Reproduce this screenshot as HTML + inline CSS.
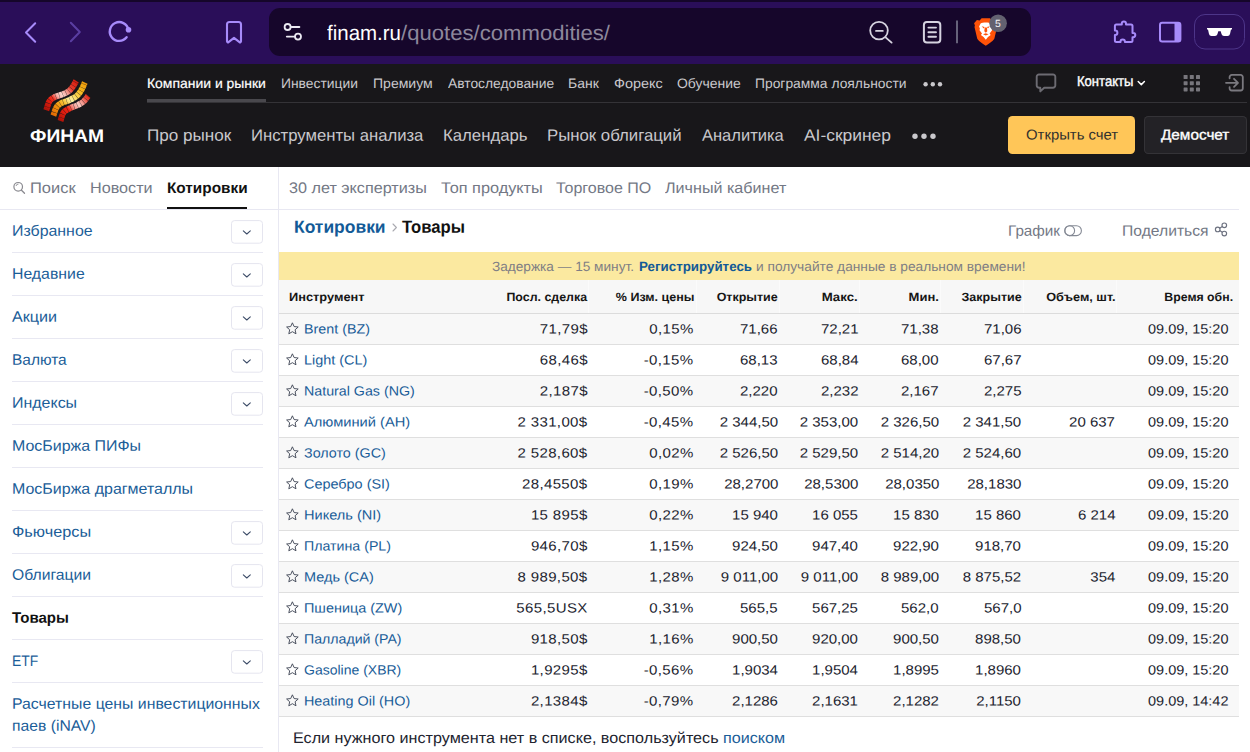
<!DOCTYPE html>
<html lang="ru"><head><meta charset="utf-8"><title>Котировки — Товары</title>
<style>
html,body{margin:0;padding:0;background:#fff;}
body{width:1250px;height:752px;position:relative;overflow:hidden;font-family:"Liberation Sans",sans-serif;}
.t{position:absolute;white-space:nowrap;line-height:1;display:block;text-rendering:geometricPrecision;}
.r{position:absolute;}
svg{position:absolute;overflow:visible;}
</style></head><body>
<div class="r" style="left:0.00px;top:0.00px;width:1250.00px;height:2.00px;background:#15062a;"></div>
<div class="r" style="left:0.00px;top:2.00px;width:1250.00px;height:62.00px;background:#2a0e59;"></div>
<div class="r" style="left:269.00px;top:8.00px;width:762.00px;height:48.00px;background:#16062b;border-radius:11px;"></div>
<svg style="left:0.00px;top:0.00px" width="1250" height="64" viewBox="0 0 1250 64"><polyline points="35.2,23.2 26,32.5 35.2,41.800" fill="none" stroke="#a78bfa" stroke-width="2" stroke-linecap="round" stroke-linejoin="round"/><polyline points="70.800,22.800 79.800,32 70.800,41.200" fill="none" stroke="#5a3ea2" stroke-width="2" stroke-linecap="round" stroke-linejoin="round"/><path d="M128.39 29.55 A9.40 9.40 0 1 0 126.61 37.29" fill="none" stroke="#a78bfa" stroke-width="2.400" stroke-linecap="round"/><circle cx="128.500" cy="29.700" r="2.800" fill="#a78bfa"/><path d="M227 41.400 V24.500 a2.500 2.500 0 0 1 2.500 -2.500 h9 a2.500 2.500 0 0 1 2.500 2.500 V41.400 a0.900 0.900 0 0 1 -1.500 0.700 l-5.500 -4.300 l-5.500 4.300 a0.900 0.900 0 0 1 -1.500 -0.700 z" fill="none" stroke="#a78bfa" stroke-width="2.1" stroke-linejoin="round"/><circle cx="287.6" cy="27" r="3" fill="none" stroke="#eceaf3" stroke-width="1.8"/><path d="M291.200 27 H299.400" stroke="#eceaf3" stroke-width="1.8" stroke-linecap="round"/><circle cx="298" cy="36.6" r="3" fill="none" stroke="#eceaf3" stroke-width="1.8"/><path d="M286.800 36.600 H294.600" stroke="#eceaf3" stroke-width="1.8" stroke-linecap="round"/><circle cx="879" cy="30.6" r="8.8" fill="none" stroke="#d6d3e0" stroke-width="1.8"/><path d="M876 30.900 H882.800" stroke="#d6d3e0" stroke-width="1.8" stroke-linecap="round"/><path d="M885.6 37.4 L891.6 42.6" stroke="#d6d3e0" stroke-width="1.9" stroke-linecap="round"/><rect x="923.9" y="22" width="16.4" height="20.6" rx="3" fill="none" stroke="#d6d3e0" stroke-width="2"/><path d="M928.4 27.6 H936 M928.4 32.2 H936 M928.4 36.8 H936" stroke="#d6d3e0" stroke-width="1.900" stroke-linecap="round"/><path d="M957 20.400 V43.200" stroke="#66627a" stroke-width="2" stroke-linecap="butt"/><path d="M981.600 18.200 H990 L992 20.400 L994.700 20 L997.500 23.300 L996.700 25.500 L997.100 27 L994.400 38.600 C993.700 40.700 990 43 985.800 45.800 C981.600 43 977.900 40.700 977.200 38.600 L974.500 27 L974.900 25.500 L974.100 23.300 L976.900 20 L979.600 20.400 Z" fill="#ff5208"/><path d="M985.800 22.600 C988 22.600 990 23 991 23.600 L992.500 26.500 L991.700 28.600 L992.100 30.200 L989.600 33.600 L990.700 35 L988 37.100 L985.800 39.700 L983.600 37.100 L980.900 35 L982 33.600 L979.500 30.200 L979.900 28.600 L979.100 26.500 L980.600 23.600 C981.600 23 983.600 22.600 985.800 22.600 Z" fill="#fff"/><path d="M981.700 26.300 l2.900 0.700 l-0.900 1.500 z M989.900 26.300 l-2.900 0.700 l0.900 1.500 z M984.700 27.600 h2.200 l0.400 3.600 l-1.500 1.500 l-1.500 -1.500 z M983 34.300 l2.800 -1 l2.800 1 l-2.800 1.300 z" fill="#ff5208"/><circle cx="998.100" cy="23.200" r="8.800" fill="#636170"/><path d="M1116.400 24.600 H1121.800 V23.500 a2.100 2.100 0 0 1 4.200 0 V24.600 H1131 a1.500 1.500 0 0 1 1.500 1.500 V33 h0.700 a2.100 2.100 0 0 1 0 4.200 h-0.700 V40.400 a1.500 1.500 0 0 1 -1.500 1.500 H1124.900 v-0.300 a2.200 2.200 0 0 0 -4.400 0 v0.300 H1116.400 a1.500 1.500 0 0 1 -1.500 -1.500 V34.900 h0.300 a2.200 2.200 0 0 0 0 -4.400 h-0.300 V26.100 a1.500 1.500 0 0 1 1.500 -1.500 z" fill="none" stroke="#a78bfa" stroke-width="2" stroke-linejoin="round"/><rect x="1160" y="22.800" width="20.400" height="18.600" rx="2.200" fill="none" stroke="#a78bfa" stroke-width="2"/><rect x="1174.500" y="22.800" width="5.900" height="18.600" fill="#a78bfa"/><rect x="1194.500" y="14.500" width="50" height="34.500" rx="10.500" fill="#2a0e59" stroke="#4d3589" stroke-width="1"/><path d="M1207 28 h25 v1.600 h-1 l-1 4.500 a2.500 2.500 0 0 1 -2.400 1.900 h-3.600 a2.500 2.500 0 0 1 -2.400 -1.800 l-0.900 -3 h-2.400 l-0.900 3 a2.500 2.500 0 0 1 -2.400 1.800 h-3.600 a2.500 2.500 0 0 1 -2.400 -1.900 l-1 -4.500 h-1 z" fill="#fff"/></svg>
<span class="t" style="top:23px;font-size:21.00px;color:#ffffff;left:327.00px;transform:scaleX(0.9755);transform-origin:0 0;">finam.ru</span>
<span class="t" style="top:23px;font-size:21.00px;color:#8d889c;left:401.00px;transform:scaleX(1.0532);transform-origin:0 0;">/quotes/commodities/</span>
<span class="t" style="top:20px;font-size:10.40px;color:#f4f3f7;left:995.20px;transform:scaleX(1.0032);transform-origin:0 0;">5</span>
<div class="r" style="left:0.00px;top:64.00px;width:1250.00px;height:103.00px;background:#18171a;"></div>
<div class="r" style="left:147.00px;top:102.00px;width:1100.00px;height:1.00px;background:#343337;"></div>
<div class="r" style="left:147.00px;top:99.00px;width:119.00px;height:3.40px;background:#49484d;"></div>
<span class="t" style="top:77px;font-size:13.70px;color:#ffffff;left:147.10px;transform:scaleX(1.0183);transform-origin:0 0;-webkit-text-stroke:0.18px #fff;">Компании и рынки</span>
<span class="t" style="top:77px;font-size:13.70px;color:#c9c8cc;left:280.80px;transform:scaleX(1.0114);transform-origin:0 0;">Инвестиции</span>
<span class="t" style="top:77px;font-size:13.70px;color:#c9c8cc;left:372.90px;transform:scaleX(1.0254);transform-origin:0 0;">Премиум</span>
<span class="t" style="top:77px;font-size:13.70px;color:#c9c8cc;left:447.50px;transform:scaleX(1.0093);transform-origin:0 0;">Автоследование</span>
<span class="t" style="top:77px;font-size:13.70px;color:#c9c8cc;left:568.30px;transform:scaleX(1.0213);transform-origin:0 0;">Банк</span>
<span class="t" style="top:77px;font-size:13.70px;color:#c9c8cc;left:613.60px;transform:scaleX(1.0533);transform-origin:0 0;">Форекс</span>
<span class="t" style="top:77px;font-size:13.70px;color:#c9c8cc;left:676.80px;transform:scaleX(1.0193);transform-origin:0 0;">Обучение</span>
<span class="t" style="top:77px;font-size:13.70px;color:#c9c8cc;left:755.10px;transform:scaleX(1.0118);transform-origin:0 0;">Программа лояльности</span>
<span class="t" style="top:127px;font-size:16.40px;color:#c9c8cc;left:146.90px;transform:translateY(0.75px) rotate(0.03deg) scaleX(1.0432);transform-origin:0 0;">Про рынок</span>
<span class="t" style="top:127px;font-size:16.40px;color:#c9c8cc;left:251.10px;transform:translateY(0.75px) rotate(0.03deg) scaleX(1.0178);transform-origin:0 0;">Инструменты анализа</span>
<span class="t" style="top:127px;font-size:16.40px;color:#c9c8cc;left:442.90px;transform:translateY(0.75px) rotate(0.03deg) scaleX(1.0225);transform-origin:0 0;">Календарь</span>
<span class="t" style="top:127px;font-size:16.40px;color:#c9c8cc;left:546.90px;transform:translateY(0.75px) rotate(0.03deg) scaleX(1.0233);transform-origin:0 0;">Рынок облигаций</span>
<span class="t" style="top:127px;font-size:16.40px;color:#c9c8cc;left:701.80px;transform:translateY(0.75px) rotate(0.03deg) scaleX(1.0069);transform-origin:0 0;">Аналитика</span>
<span class="t" style="top:127px;font-size:16.40px;color:#c9c8cc;left:803.50px;transform:translateY(0.75px) rotate(0.03deg) scaleX(1.0626);transform-origin:0 0;">AI-скринер</span>
<div class="r" style="left:1008.00px;top:116.00px;width:127.00px;height:38.00px;background:#ffc658;border-radius:4.5px;"></div>
<div class="r" style="left:1144.00px;top:116.00px;width:103.00px;height:38.00px;background:#232226;border-radius:4.5px;box-shadow:inset 0 0 0 1px #343337;"></div>
<span class="t" style="top:75px;font-size:14.30px;color:#ffffff;left:1077.30px;transform:scaleX(0.9131);transform-origin:0 0;-webkit-text-stroke:0.4px #fff;">Контакты</span>
<span class="t" style="top:128px;font-size:14.30px;color:#33322e;left:1025.80px;transform:translateY(0.50px) rotate(0.03deg) scaleX(1.0407);transform-origin:0 0;">Открыть счет</span>
<span class="t" style="top:128px;font-size:14.30px;color:#ffffff;left:1161.40px;transform:translateY(0.50px) rotate(0.03deg) scaleX(1.0706);transform-origin:0 0;-webkit-text-stroke:0.35px #fff;">Демосчет</span>
<svg style="left:0.00px;top:64.00px" width="1250" height="103" viewBox="0 64 1250 103"><circle cx="925.6" cy="84.2" r="2.2" fill="#c9c8cc"/><circle cx="932.8" cy="84.2" r="2.2" fill="#c9c8cc"/><circle cx="940.0" cy="84.2" r="2.2" fill="#c9c8cc"/><circle cx="915.0" cy="136.2" r="2.7" fill="#c9c8cc"/><circle cx="924.0" cy="136.2" r="2.7" fill="#c9c8cc"/><circle cx="933.0" cy="136.2" r="2.7" fill="#c9c8cc"/><path d="M1039 74.500 h14 a2.300 2.300 0 0 1 2.300 2.300 v8.600 a2.300 2.300 0 0 1 -2.300 2.300 h-8.800 l-3.900 3.700 v-3.700 h-1.300 a2.300 2.300 0 0 1 -2.300 -2.300 v-8.600 a2.300 2.300 0 0 1 2.300 -2.300 z" fill="none" stroke="#6c6b72" stroke-width="1.900" stroke-linejoin="round"/><polyline points="1138.200,81.500 1141.300,84.600 1144.400,81.500" fill="none" stroke="#fff" stroke-width="1.500" stroke-linecap="round" stroke-linejoin="round"/><rect x="1183.6" y="75.0" width="4" height="4" rx="0.600" fill="#77767c"/><rect x="1183.6" y="81.2" width="4" height="4" rx="0.600" fill="#77767c"/><rect x="1183.6" y="87.4" width="4" height="4" rx="0.600" fill="#77767c"/><rect x="1189.8" y="75.0" width="4" height="4" rx="0.600" fill="#77767c"/><rect x="1189.8" y="81.2" width="4" height="4" rx="0.600" fill="#77767c"/><rect x="1189.8" y="87.4" width="4" height="4" rx="0.600" fill="#77767c"/><rect x="1196.0" y="75.0" width="4" height="4" rx="0.600" fill="#77767c"/><rect x="1196.0" y="81.2" width="4" height="4" rx="0.600" fill="#77767c"/><rect x="1196.0" y="87.4" width="4" height="4" rx="0.600" fill="#77767c"/><path d="M1229.600 78.300 v-1.200 a2.200 2.200 0 0 1 2.200 -2.200 h8.800 a2.200 2.200 0 0 1 2.200 2.200 v11.200 a2.200 2.200 0 0 1 -2.200 2.200 h-8.800 a2.200 2.200 0 0 1 -2.200 -2.200 v-1.200" fill="none" stroke="#7a797f" stroke-width="1.800" stroke-linecap="round"/><path d="M1226 82.800 h11.800 M1234 78.800 l4 4 l-4 4" fill="none" stroke="#7a797f" stroke-width="1.800" stroke-linecap="round" stroke-linejoin="round"/><defs><linearGradient id="g1" gradientUnits="userSpaceOnUse" x1="46" y1="109" x2="77" y2="81"><stop offset="0" stop-color="#b0140a"/><stop offset=".18" stop-color="#e01c0e"/><stop offset=".3" stop-color="#ee3020"/><stop offset=".42" stop-color="#f8b4ac"/><stop offset=".52" stop-color="#fad2cb"/><stop offset=".64" stop-color="#f29a92"/><stop offset=".78" stop-color="#e63a2a"/><stop offset="1" stop-color="#d61a0c"/></linearGradient><linearGradient id="g2" gradientUnits="userSpaceOnUse" x1="53" y1="114" x2="85" y2="83"><stop offset="0" stop-color="#e46c04"/><stop offset=".2" stop-color="#f2940c"/><stop offset=".36" stop-color="#f7c236"/><stop offset=".5" stop-color="#fcf0a2"/><stop offset=".64" stop-color="#f9d858"/><stop offset=".8" stop-color="#f6b81c"/><stop offset="1" stop-color="#ee9a0a"/></linearGradient><linearGradient id="g3" gradientUnits="userSpaceOnUse" x1="60" y1="120" x2="89" y2="96"><stop offset="0" stop-color="#ae1208"/><stop offset=".2" stop-color="#e01c0e"/><stop offset=".36" stop-color="#f02414"/><stop offset=".5" stop-color="#f6968c"/><stop offset=".64" stop-color="#fac8c0"/><stop offset=".78" stop-color="#f28a80"/><stop offset=".9" stop-color="#e64434"/><stop offset="1" stop-color="#dc2414"/></linearGradient></defs><path d="M46.30 110.20 C46.82 108.72 48.05 103.47 49.40 101.30 C50.75 99.13 52.30 98.33 54.40 97.20 C56.50 96.07 59.65 95.47 62.00 94.50 C64.35 93.53 66.68 92.73 68.50 91.40 C70.32 90.07 71.62 88.25 72.90 86.50 C74.18 84.75 75.65 81.83 76.20 80.90" fill="none" stroke="url(#g1)" stroke-width="6.000" stroke-dasharray="3.250 0.300"/><path d="M53.40 115.60 C53.92 114.22 55.17 109.38 56.50 107.30 C57.83 105.22 59.30 104.28 61.40 103.10 C63.50 101.92 66.52 101.42 69.10 100.20 C71.68 98.98 74.82 97.57 76.90 95.80 C78.98 94.03 80.28 91.80 81.60 89.60 C82.92 87.40 84.27 83.77 84.80 82.60" fill="none" stroke="url(#g2)" stroke-width="6.000" stroke-dasharray="3.250 0.300"/><path d="M60.50 121.00 C61.02 119.58 61.98 114.65 63.60 112.50 C65.22 110.35 67.83 109.33 70.20 108.10 C72.57 106.87 75.53 106.23 77.80 105.10 C80.07 103.97 82.07 102.85 83.80 101.30 C85.53 99.75 87.47 96.72 88.20 95.80" fill="none" stroke="url(#g3)" stroke-width="6.000" stroke-dasharray="3.250 0.300"/></svg>
<span class="t" style="top:127px;font-size:18.00px;color:#ffffff;font-weight:700;left:30.20px;transform:scaleX(1.0679);transform-origin:0 0;">ФИНАМ</span>
<div class="r" style="left:278.00px;top:167.00px;width:1.00px;height:585.00px;background:#e8e8f2;"></div>
<div class="r" style="left:0.00px;top:209.00px;width:1239.00px;height:1.00px;background:#e8e8f2;"></div>
<div class="r" style="left:167.00px;top:207.00px;width:80.00px;height:2.40px;background:#111;"></div>
<span class="t" style="top:181px;font-size:15.35px;color:#737885;left:30.30px;transform:scaleX(1.0722);transform-origin:0 0;">Поиск</span>
<span class="t" style="top:181px;font-size:15.35px;color:#737885;left:89.60px;transform:scaleX(1.0538);transform-origin:0 0;">Новости</span>
<span class="t" style="top:181px;font-size:15.35px;color:#111111;font-weight:700;left:166.60px;transform:scaleX(1.0001);transform-origin:0 0;">Котировки</span>
<span class="t" style="top:223px;font-size:15.10px;color:#1a5d98;left:11.70px;transform:translateY(0.75px) rotate(0.03deg) scaleX(1.0536);transform-origin:0 0;">Избранное</span>
<div class="r" style="left:12.00px;top:252.30px;width:251.00px;height:1.00px;background:#e8e8f2;"></div>
<span class="t" style="top:266px;font-size:15.10px;color:#1a5d98;left:11.70px;transform:translateY(0.75px) rotate(0.03deg) scaleX(1.0482);transform-origin:0 0;">Недавние</span>
<div class="r" style="left:12.00px;top:295.30px;width:251.00px;height:1.00px;background:#e8e8f2;"></div>
<span class="t" style="top:309px;font-size:15.10px;color:#1a5d98;left:11.70px;transform:translateY(0.75px) rotate(0.03deg) scaleX(1.0667);transform-origin:0 0;">Акции</span>
<div class="r" style="left:12.00px;top:338.30px;width:251.00px;height:1.00px;background:#e8e8f2;"></div>
<span class="t" style="top:352px;font-size:15.10px;color:#1a5d98;left:11.70px;transform:translateY(0.75px) rotate(0.03deg) scaleX(1.0242);transform-origin:0 0;">Валюта</span>
<div class="r" style="left:12.00px;top:381.30px;width:251.00px;height:1.00px;background:#e8e8f2;"></div>
<span class="t" style="top:395px;font-size:15.10px;color:#1a5d98;left:11.70px;transform:translateY(0.75px) rotate(0.03deg) scaleX(1.0575);transform-origin:0 0;">Индексы</span>
<div class="r" style="left:12.00px;top:424.30px;width:251.00px;height:1.00px;background:#e8e8f2;"></div>
<span class="t" style="top:438px;font-size:15.10px;color:#1a5d98;left:11.70px;transform:translateY(0.75px) rotate(0.03deg) scaleX(1.0571);transform-origin:0 0;">МосБиржа ПИФы</span>
<div class="r" style="left:12.00px;top:467.30px;width:251.00px;height:1.00px;background:#e8e8f2;"></div>
<span class="t" style="top:481px;font-size:15.10px;color:#1a5d98;left:11.70px;transform:translateY(0.75px) rotate(0.03deg) scaleX(1.0586);transform-origin:0 0;">МосБиржа драгметаллы</span>
<div class="r" style="left:12.00px;top:510.30px;width:251.00px;height:1.00px;background:#e8e8f2;"></div>
<span class="t" style="top:524px;font-size:15.10px;color:#1a5d98;left:11.70px;transform:translateY(0.75px) rotate(0.03deg) scaleX(1.0778);transform-origin:0 0;">Фьючерсы</span>
<div class="r" style="left:12.00px;top:553.30px;width:251.00px;height:1.00px;background:#e8e8f2;"></div>
<span class="t" style="top:567px;font-size:15.10px;color:#1a5d98;left:11.70px;transform:translateY(0.75px) rotate(0.03deg) scaleX(1.0404);transform-origin:0 0;">Облигации</span>
<div class="r" style="left:12.00px;top:596.30px;width:251.00px;height:1.00px;background:#e8e8f2;"></div>
<span class="t" style="top:610px;font-size:15.10px;color:#111111;font-weight:700;left:11.70px;transform:translateY(0.75px) rotate(0.03deg) scaleX(0.9969);transform-origin:0 0;">Товары</span>
<div class="r" style="left:12.00px;top:639.30px;width:251.00px;height:1.00px;background:#e8e8f2;"></div>
<span class="t" style="top:653px;font-size:15.10px;color:#1a5d98;left:11.70px;transform:translateY(0.75px) rotate(0.03deg) scaleX(0.9223);transform-origin:0 0;">ETF</span>
<div class="r" style="left:12.00px;top:682.30px;width:251.00px;height:1.00px;background:#e8e8f2;"></div>
<span class="t" style="top:696px;font-size:15.10px;color:#1a5d98;left:11.70px;transform:translateY(0.75px) rotate(0.03deg) scaleX(1.0483);transform-origin:0 0;">Расчетные цены инвестиционных</span>
<span class="t" style="top:718px;font-size:15.10px;color:#1a5d98;left:11.70px;transform:translateY(0.75px) rotate(0.03deg) scaleX(1.0410);transform-origin:0 0;">паев (iNAV)</span>
<div class="r" style="left:12.00px;top:747.30px;width:251.00px;height:1.00px;background:#e8e8f2;"></div>
<svg style="left:0.00px;top:167.00px" width="279" height="585" viewBox="0 167 279 585"><circle cx="18.200" cy="186.800" r="4.300" fill="none" stroke="#8a8a90" stroke-width="1.200"/><path d="M21.500 190.200 l3 3" stroke="#8a8a90" stroke-width="1.300" stroke-linecap="round"/><path d="M16 186 a2.500 2.500 0 0 1 2.500 -2" fill="none" stroke="#8a8a90" stroke-width="0.900"/><rect x="231.500" y="220.60" width="31" height="22.600" rx="3" fill="#fff" stroke="#e5e5ef" stroke-width="1"/><polyline points="243.300,230.80 246.800,234.00 250.300,230.80" fill="none" stroke="#3a4a66" stroke-width="1.050" stroke-linecap="round" stroke-linejoin="round"/><rect x="231.500" y="263.60" width="31" height="22.600" rx="3" fill="#fff" stroke="#e5e5ef" stroke-width="1"/><polyline points="243.300,273.80 246.800,277.00 250.300,273.80" fill="none" stroke="#3a4a66" stroke-width="1.050" stroke-linecap="round" stroke-linejoin="round"/><rect x="231.500" y="306.60" width="31" height="22.600" rx="3" fill="#fff" stroke="#e5e5ef" stroke-width="1"/><polyline points="243.300,316.80 246.800,320.00 250.300,316.80" fill="none" stroke="#3a4a66" stroke-width="1.050" stroke-linecap="round" stroke-linejoin="round"/><rect x="231.500" y="349.60" width="31" height="22.600" rx="3" fill="#fff" stroke="#e5e5ef" stroke-width="1"/><polyline points="243.300,359.80 246.800,363.00 250.300,359.80" fill="none" stroke="#3a4a66" stroke-width="1.050" stroke-linecap="round" stroke-linejoin="round"/><rect x="231.500" y="392.60" width="31" height="22.600" rx="3" fill="#fff" stroke="#e5e5ef" stroke-width="1"/><polyline points="243.300,402.80 246.800,406.00 250.300,402.80" fill="none" stroke="#3a4a66" stroke-width="1.050" stroke-linecap="round" stroke-linejoin="round"/><rect x="231.500" y="521.60" width="31" height="22.600" rx="3" fill="#fff" stroke="#e5e5ef" stroke-width="1"/><polyline points="243.300,531.80 246.800,535.00 250.300,531.80" fill="none" stroke="#3a4a66" stroke-width="1.050" stroke-linecap="round" stroke-linejoin="round"/><rect x="231.500" y="564.60" width="31" height="22.600" rx="3" fill="#fff" stroke="#e5e5ef" stroke-width="1"/><polyline points="243.300,574.80 246.800,578.00 250.300,574.80" fill="none" stroke="#3a4a66" stroke-width="1.050" stroke-linecap="round" stroke-linejoin="round"/><rect x="231.500" y="650.60" width="31" height="22.600" rx="3" fill="#fff" stroke="#e5e5ef" stroke-width="1"/><polyline points="243.300,660.80 246.800,664.00 250.300,660.80" fill="none" stroke="#3a4a66" stroke-width="1.050" stroke-linecap="round" stroke-linejoin="round"/></svg>
<span class="t" style="top:181px;font-size:15.35px;color:#737885;left:288.60px;transform:scaleX(1.0544);transform-origin:0 0;">30 лет экспертизы</span>
<span class="t" style="top:181px;font-size:15.35px;color:#737885;left:440.60px;transform:scaleX(1.0616);transform-origin:0 0;">Топ продукты</span>
<span class="t" style="top:181px;font-size:15.35px;color:#737885;left:556.10px;transform:scaleX(1.0437);transform-origin:0 0;">Торговое ПО</span>
<span class="t" style="top:181px;font-size:15.35px;color:#737885;left:665.10px;transform:scaleX(1.0506);transform-origin:0 0;">Личный кабинет</span>
<span class="t" style="top:218px;font-size:17.60px;color:#125a97;font-weight:700;left:293.60px;transform:translateY(0.75px) rotate(0.03deg) scaleX(0.9911);transform-origin:0 0;">Котировки</span>
<span class="t" style="top:218px;font-size:17.60px;color:#111111;font-weight:700;left:402.20px;transform:translateY(0.75px) rotate(0.03deg) scaleX(0.9469);transform-origin:0 0;">Товары</span>
<span class="t" style="top:223px;font-size:15.00px;color:#737885;left:1007.60px;transform:translateY(0.75px) rotate(0.03deg) scaleX(1.0146);transform-origin:0 0;">График</span>
<span class="t" style="top:223px;font-size:15.00px;color:#737885;left:1122.00px;transform:translateY(0.75px) rotate(0.03deg) scaleX(1.0453);transform-origin:0 0;">Поделиться</span>
<div class="r" style="left:279.00px;top:252.00px;width:960.00px;height:28.00px;background:#fbe9a0;"></div>
<span class="t" style="top:260px;font-size:13.40px;color:#7f7e84;left:492.40px;transform:scaleX(1.0186);transform-origin:0 0;">Задержка — 15 минут.</span>
<span class="t" style="top:260px;font-size:13.40px;color:#125a97;font-weight:700;left:638.60px;transform:scaleX(0.9959);transform-origin:0 0;">Регистрируйтесь</span>
<span class="t" style="top:260px;font-size:13.40px;color:#7f7e84;left:756.00px;transform:scaleX(1.0247);transform-origin:0 0;">и получайте данные в реальном времени!</span>
<div class="r" style="left:279.00px;top:280.00px;width:960.00px;height:33.00px;background:#f7f7f7;"></div>
<div class="r" style="left:279.00px;top:313.00px;width:960.00px;height:1.00px;background:#dcdcdc;"></div>
<div class="r" style="left:588.00px;top:280.00px;width:1.40px;height:33.00px;background:#fbfbfb;"></div>
<div class="r" style="left:696.00px;top:280.00px;width:1.40px;height:33.00px;background:#fbfbfb;"></div>
<div class="r" style="left:779.00px;top:280.00px;width:1.40px;height:33.00px;background:#fbfbfb;"></div>
<div class="r" style="left:859.00px;top:280.00px;width:1.40px;height:33.00px;background:#fbfbfb;"></div>
<div class="r" style="left:940.00px;top:280.00px;width:1.40px;height:33.00px;background:#fbfbfb;"></div>
<div class="r" style="left:1022.70px;top:280.00px;width:1.40px;height:33.00px;background:#fbfbfb;"></div>
<div class="r" style="left:1116.00px;top:280.00px;width:1.40px;height:33.00px;background:#fbfbfb;"></div>
<span class="t" style="top:291px;font-size:12.00px;color:#151515;font-weight:700;left:288.60px;transform:scaleX(1.0678);transform-origin:0 0;">Инструмент</span>
<span class="t" style="top:291px;font-size:12.00px;color:#151515;font-weight:700;right:662.80px;transform:scaleX(1.0329);transform-origin:100% 0;">Посл. сделка</span>
<span class="t" style="top:291px;font-size:12.00px;color:#151515;font-weight:700;right:555.70px;transform:scaleX(1.0426);transform-origin:100% 0;">% Изм. цены</span>
<span class="t" style="top:291px;font-size:12.00px;color:#151515;font-weight:700;right:472.30px;transform:scaleX(1.0403);transform-origin:100% 0;">Открытие</span>
<span class="t" style="top:291px;font-size:12.00px;color:#151515;font-weight:700;right:392.30px;transform:scaleX(1.1019);transform-origin:100% 0;">Макс.</span>
<span class="t" style="top:291px;font-size:12.00px;color:#151515;font-weight:700;right:311.40px;transform:scaleX(1.0869);transform-origin:100% 0;">Мин.</span>
<span class="t" style="top:291px;font-size:12.00px;color:#151515;font-weight:700;right:228.70px;transform:scaleX(1.0433);transform-origin:100% 0;">Закрытие</span>
<span class="t" style="top:291px;font-size:12.00px;color:#151515;font-weight:700;right:134.90px;transform:scaleX(1.0585);transform-origin:100% 0;">Объем, шт.</span>
<span class="t" style="top:291px;font-size:12.00px;color:#151515;font-weight:700;right:16.80px;transform:scaleX(1.0244);transform-origin:100% 0;">Время обн.</span>
<div class="r" style="left:279.00px;top:314.00px;width:960.00px;height:30.00px;background:#f8f8f8;"></div>
<div class="r" style="left:279.00px;top:344.00px;width:960.00px;height:1.00px;background:#dfdfdf;"></div>
<span class="t" style="top:322px;font-size:13.40px;color:#1a5d98;left:303.80px;transform:translateY(0.50px) rotate(0.03deg) scaleX(1.0686);transform-origin:0 0;">Brent (BZ)</span>
<span class="t" style="top:322px;font-size:13.40px;color:#22242f;letter-spacing:0.33px;margin-right:-0.33px;right:662.60px;transform:translateY(0.50px) rotate(0.03deg) scaleX(1.1200);transform-origin:100% 0;">71,79$</span>
<span class="t" style="top:322px;font-size:13.40px;color:#22242f;letter-spacing:0.33px;margin-right:-0.33px;right:556.60px;transform:translateY(0.50px) rotate(0.03deg) scaleX(1.1200);transform-origin:100% 0;">0,15%</span>
<span class="t" style="top:322px;font-size:13.40px;color:#22242f;right:472.00px;transform:translateY(0.50px) rotate(0.03deg) scaleX(1.1200);transform-origin:100% 0;">71,66</span>
<span class="t" style="top:322px;font-size:13.40px;color:#22242f;right:391.60px;transform:translateY(0.50px) rotate(0.03deg) scaleX(1.1200);transform-origin:100% 0;">72,21</span>
<span class="t" style="top:322px;font-size:13.40px;color:#22242f;right:311.00px;transform:translateY(0.50px) rotate(0.03deg) scaleX(1.1200);transform-origin:100% 0;">71,38</span>
<span class="t" style="top:322px;font-size:13.40px;color:#22242f;right:228.60px;transform:translateY(0.50px) rotate(0.03deg) scaleX(1.1200);transform-origin:100% 0;">71,06</span>
<span class="t" style="top:322px;font-size:13.40px;color:#22242f;right:21.20px;transform:translateY(0.50px) rotate(0.03deg) scaleX(1.0796);transform-origin:100% 0;">09.09, 15:20</span>
<div class="r" style="left:279.00px;top:375.00px;width:960.00px;height:1.00px;background:#dfdfdf;"></div>
<span class="t" style="top:353px;font-size:13.40px;color:#1a5d98;left:303.80px;transform:translateY(0.50px) rotate(0.03deg) scaleX(1.0783);transform-origin:0 0;">Light (CL)</span>
<span class="t" style="top:353px;font-size:13.40px;color:#22242f;letter-spacing:0.33px;margin-right:-0.33px;right:662.60px;transform:translateY(0.50px) rotate(0.03deg) scaleX(1.1200);transform-origin:100% 0;">68,46$</span>
<span class="t" style="top:353px;font-size:13.40px;color:#22242f;letter-spacing:0.33px;margin-right:-0.33px;right:556.60px;transform:translateY(0.50px) rotate(0.03deg) scaleX(1.1200);transform-origin:100% 0;">-0,15%</span>
<span class="t" style="top:353px;font-size:13.40px;color:#22242f;right:472.00px;transform:translateY(0.50px) rotate(0.03deg) scaleX(1.1200);transform-origin:100% 0;">68,13</span>
<span class="t" style="top:353px;font-size:13.40px;color:#22242f;right:391.60px;transform:translateY(0.50px) rotate(0.03deg) scaleX(1.1200);transform-origin:100% 0;">68,84</span>
<span class="t" style="top:353px;font-size:13.40px;color:#22242f;right:311.00px;transform:translateY(0.50px) rotate(0.03deg) scaleX(1.1200);transform-origin:100% 0;">68,00</span>
<span class="t" style="top:353px;font-size:13.40px;color:#22242f;right:228.60px;transform:translateY(0.50px) rotate(0.03deg) scaleX(1.1200);transform-origin:100% 0;">67,67</span>
<span class="t" style="top:353px;font-size:13.40px;color:#22242f;right:21.20px;transform:translateY(0.50px) rotate(0.03deg) scaleX(1.0796);transform-origin:100% 0;">09.09, 15:20</span>
<div class="r" style="left:279.00px;top:376.00px;width:960.00px;height:30.00px;background:#f8f8f8;"></div>
<div class="r" style="left:279.00px;top:406.00px;width:960.00px;height:1.00px;background:#dfdfdf;"></div>
<span class="t" style="top:384px;font-size:13.40px;color:#1a5d98;left:303.80px;transform:translateY(0.50px) rotate(0.03deg) scaleX(1.0636);transform-origin:0 0;">Natural Gas (NG)</span>
<span class="t" style="top:384px;font-size:13.40px;color:#22242f;letter-spacing:0.33px;margin-right:-0.33px;right:662.60px;transform:translateY(0.50px) rotate(0.03deg) scaleX(1.1200);transform-origin:100% 0;">2,187$</span>
<span class="t" style="top:384px;font-size:13.40px;color:#22242f;letter-spacing:0.33px;margin-right:-0.33px;right:556.60px;transform:translateY(0.50px) rotate(0.03deg) scaleX(1.1200);transform-origin:100% 0;">-0,50%</span>
<span class="t" style="top:384px;font-size:13.40px;color:#22242f;right:472.00px;transform:translateY(0.50px) rotate(0.03deg) scaleX(1.1200);transform-origin:100% 0;">2,220</span>
<span class="t" style="top:384px;font-size:13.40px;color:#22242f;right:391.60px;transform:translateY(0.50px) rotate(0.03deg) scaleX(1.1200);transform-origin:100% 0;">2,232</span>
<span class="t" style="top:384px;font-size:13.40px;color:#22242f;right:311.00px;transform:translateY(0.50px) rotate(0.03deg) scaleX(1.1200);transform-origin:100% 0;">2,167</span>
<span class="t" style="top:384px;font-size:13.40px;color:#22242f;right:228.60px;transform:translateY(0.50px) rotate(0.03deg) scaleX(1.1200);transform-origin:100% 0;">2,275</span>
<span class="t" style="top:384px;font-size:13.40px;color:#22242f;right:21.20px;transform:translateY(0.50px) rotate(0.03deg) scaleX(1.0796);transform-origin:100% 0;">09.09, 15:20</span>
<div class="r" style="left:279.00px;top:437.00px;width:960.00px;height:1.00px;background:#dfdfdf;"></div>
<span class="t" style="top:415px;font-size:13.40px;color:#1a5d98;left:303.80px;transform:translateY(0.50px) rotate(0.03deg) scaleX(1.0957);transform-origin:0 0;">Алюминий (AH)</span>
<span class="t" style="top:415px;font-size:13.40px;color:#22242f;letter-spacing:0.33px;margin-right:-0.33px;right:662.60px;transform:translateY(0.50px) rotate(0.03deg) scaleX(1.1200);transform-origin:100% 0;">2 331,00$</span>
<span class="t" style="top:415px;font-size:13.40px;color:#22242f;letter-spacing:0.33px;margin-right:-0.33px;right:556.60px;transform:translateY(0.50px) rotate(0.03deg) scaleX(1.1200);transform-origin:100% 0;">-0,45%</span>
<span class="t" style="top:415px;font-size:13.40px;color:#22242f;right:472.00px;transform:translateY(0.50px) rotate(0.03deg) scaleX(1.1200);transform-origin:100% 0;">2 344,50</span>
<span class="t" style="top:415px;font-size:13.40px;color:#22242f;right:391.60px;transform:translateY(0.50px) rotate(0.03deg) scaleX(1.1200);transform-origin:100% 0;">2 353,00</span>
<span class="t" style="top:415px;font-size:13.40px;color:#22242f;right:311.00px;transform:translateY(0.50px) rotate(0.03deg) scaleX(1.1200);transform-origin:100% 0;">2 326,50</span>
<span class="t" style="top:415px;font-size:13.40px;color:#22242f;right:228.60px;transform:translateY(0.50px) rotate(0.03deg) scaleX(1.1200);transform-origin:100% 0;">2 341,50</span>
<span class="t" style="top:415px;font-size:13.40px;color:#22242f;right:134.80px;transform:translateY(0.50px) rotate(0.03deg) scaleX(1.1200);transform-origin:100% 0;">20 637</span>
<span class="t" style="top:415px;font-size:13.40px;color:#22242f;right:21.20px;transform:translateY(0.50px) rotate(0.03deg) scaleX(1.0796);transform-origin:100% 0;">09.09, 15:20</span>
<div class="r" style="left:279.00px;top:438.00px;width:960.00px;height:30.00px;background:#f8f8f8;"></div>
<div class="r" style="left:279.00px;top:468.00px;width:960.00px;height:1.00px;background:#dfdfdf;"></div>
<span class="t" style="top:446px;font-size:13.40px;color:#1a5d98;left:303.80px;transform:translateY(0.50px) rotate(0.03deg) scaleX(1.0691);transform-origin:0 0;">Золото (GC)</span>
<span class="t" style="top:446px;font-size:13.40px;color:#22242f;letter-spacing:0.33px;margin-right:-0.33px;right:662.60px;transform:translateY(0.50px) rotate(0.03deg) scaleX(1.1200);transform-origin:100% 0;">2 528,60$</span>
<span class="t" style="top:446px;font-size:13.40px;color:#22242f;letter-spacing:0.33px;margin-right:-0.33px;right:556.60px;transform:translateY(0.50px) rotate(0.03deg) scaleX(1.1200);transform-origin:100% 0;">0,02%</span>
<span class="t" style="top:446px;font-size:13.40px;color:#22242f;right:472.00px;transform:translateY(0.50px) rotate(0.03deg) scaleX(1.1200);transform-origin:100% 0;">2 526,50</span>
<span class="t" style="top:446px;font-size:13.40px;color:#22242f;right:391.60px;transform:translateY(0.50px) rotate(0.03deg) scaleX(1.1200);transform-origin:100% 0;">2 529,50</span>
<span class="t" style="top:446px;font-size:13.40px;color:#22242f;right:311.00px;transform:translateY(0.50px) rotate(0.03deg) scaleX(1.1200);transform-origin:100% 0;">2 514,20</span>
<span class="t" style="top:446px;font-size:13.40px;color:#22242f;right:228.60px;transform:translateY(0.50px) rotate(0.03deg) scaleX(1.1200);transform-origin:100% 0;">2 524,60</span>
<span class="t" style="top:446px;font-size:13.40px;color:#22242f;right:21.20px;transform:translateY(0.50px) rotate(0.03deg) scaleX(1.0796);transform-origin:100% 0;">09.09, 15:20</span>
<div class="r" style="left:279.00px;top:499.00px;width:960.00px;height:1.00px;background:#dfdfdf;"></div>
<span class="t" style="top:477px;font-size:13.40px;color:#1a5d98;left:303.80px;transform:translateY(0.50px) rotate(0.03deg) scaleX(1.0775);transform-origin:0 0;">Серебро (SI)</span>
<span class="t" style="top:477px;font-size:13.40px;color:#22242f;letter-spacing:0.33px;margin-right:-0.33px;right:662.60px;transform:translateY(0.50px) rotate(0.03deg) scaleX(1.1200);transform-origin:100% 0;">28,4550$</span>
<span class="t" style="top:477px;font-size:13.40px;color:#22242f;letter-spacing:0.33px;margin-right:-0.33px;right:556.60px;transform:translateY(0.50px) rotate(0.03deg) scaleX(1.1200);transform-origin:100% 0;">0,19%</span>
<span class="t" style="top:477px;font-size:13.40px;color:#22242f;right:472.00px;transform:translateY(0.50px) rotate(0.03deg) scaleX(1.1200);transform-origin:100% 0;">28,2700</span>
<span class="t" style="top:477px;font-size:13.40px;color:#22242f;right:391.60px;transform:translateY(0.50px) rotate(0.03deg) scaleX(1.1200);transform-origin:100% 0;">28,5300</span>
<span class="t" style="top:477px;font-size:13.40px;color:#22242f;right:311.00px;transform:translateY(0.50px) rotate(0.03deg) scaleX(1.1200);transform-origin:100% 0;">28,0350</span>
<span class="t" style="top:477px;font-size:13.40px;color:#22242f;right:228.60px;transform:translateY(0.50px) rotate(0.03deg) scaleX(1.1200);transform-origin:100% 0;">28,1830</span>
<span class="t" style="top:477px;font-size:13.40px;color:#22242f;right:21.20px;transform:translateY(0.50px) rotate(0.03deg) scaleX(1.0796);transform-origin:100% 0;">09.09, 15:20</span>
<div class="r" style="left:279.00px;top:500.00px;width:960.00px;height:30.00px;background:#f8f8f8;"></div>
<div class="r" style="left:279.00px;top:530.00px;width:960.00px;height:1.00px;background:#dfdfdf;"></div>
<span class="t" style="top:508px;font-size:13.40px;color:#1a5d98;left:303.80px;transform:translateY(0.50px) rotate(0.03deg) scaleX(1.0876);transform-origin:0 0;">Никель (NI)</span>
<span class="t" style="top:508px;font-size:13.40px;color:#22242f;letter-spacing:0.33px;margin-right:-0.33px;right:662.60px;transform:translateY(0.50px) rotate(0.03deg) scaleX(1.1200);transform-origin:100% 0;">15 895$</span>
<span class="t" style="top:508px;font-size:13.40px;color:#22242f;letter-spacing:0.33px;margin-right:-0.33px;right:556.60px;transform:translateY(0.50px) rotate(0.03deg) scaleX(1.1200);transform-origin:100% 0;">0,22%</span>
<span class="t" style="top:508px;font-size:13.40px;color:#22242f;right:472.00px;transform:translateY(0.50px) rotate(0.03deg) scaleX(1.1200);transform-origin:100% 0;">15 940</span>
<span class="t" style="top:508px;font-size:13.40px;color:#22242f;right:391.60px;transform:translateY(0.50px) rotate(0.03deg) scaleX(1.1200);transform-origin:100% 0;">16 055</span>
<span class="t" style="top:508px;font-size:13.40px;color:#22242f;right:311.00px;transform:translateY(0.50px) rotate(0.03deg) scaleX(1.1200);transform-origin:100% 0;">15 830</span>
<span class="t" style="top:508px;font-size:13.40px;color:#22242f;right:228.60px;transform:translateY(0.50px) rotate(0.03deg) scaleX(1.1200);transform-origin:100% 0;">15 860</span>
<span class="t" style="top:508px;font-size:13.40px;color:#22242f;right:134.80px;transform:translateY(0.50px) rotate(0.03deg) scaleX(1.1200);transform-origin:100% 0;">6 214</span>
<span class="t" style="top:508px;font-size:13.40px;color:#22242f;right:21.20px;transform:translateY(0.50px) rotate(0.03deg) scaleX(1.0796);transform-origin:100% 0;">09.09, 15:20</span>
<div class="r" style="left:279.00px;top:561.00px;width:960.00px;height:1.00px;background:#dfdfdf;"></div>
<span class="t" style="top:539px;font-size:13.40px;color:#1a5d98;left:303.80px;transform:translateY(0.50px) rotate(0.03deg) scaleX(1.0600);transform-origin:0 0;">Платина (PL)</span>
<span class="t" style="top:539px;font-size:13.40px;color:#22242f;letter-spacing:0.33px;margin-right:-0.33px;right:662.60px;transform:translateY(0.50px) rotate(0.03deg) scaleX(1.1200);transform-origin:100% 0;">946,70$</span>
<span class="t" style="top:539px;font-size:13.40px;color:#22242f;letter-spacing:0.33px;margin-right:-0.33px;right:556.60px;transform:translateY(0.50px) rotate(0.03deg) scaleX(1.1200);transform-origin:100% 0;">1,15%</span>
<span class="t" style="top:539px;font-size:13.40px;color:#22242f;right:472.00px;transform:translateY(0.50px) rotate(0.03deg) scaleX(1.1200);transform-origin:100% 0;">924,50</span>
<span class="t" style="top:539px;font-size:13.40px;color:#22242f;right:391.60px;transform:translateY(0.50px) rotate(0.03deg) scaleX(1.1200);transform-origin:100% 0;">947,40</span>
<span class="t" style="top:539px;font-size:13.40px;color:#22242f;right:311.00px;transform:translateY(0.50px) rotate(0.03deg) scaleX(1.1200);transform-origin:100% 0;">922,90</span>
<span class="t" style="top:539px;font-size:13.40px;color:#22242f;right:228.60px;transform:translateY(0.50px) rotate(0.03deg) scaleX(1.1200);transform-origin:100% 0;">918,70</span>
<span class="t" style="top:539px;font-size:13.40px;color:#22242f;right:21.20px;transform:translateY(0.50px) rotate(0.03deg) scaleX(1.0796);transform-origin:100% 0;">09.09, 15:20</span>
<div class="r" style="left:279.00px;top:562.00px;width:960.00px;height:30.00px;background:#f8f8f8;"></div>
<div class="r" style="left:279.00px;top:592.00px;width:960.00px;height:1.00px;background:#dfdfdf;"></div>
<span class="t" style="top:570px;font-size:13.40px;color:#1a5d98;left:303.80px;transform:translateY(0.50px) rotate(0.03deg) scaleX(1.0822);transform-origin:0 0;">Медь (CA)</span>
<span class="t" style="top:570px;font-size:13.40px;color:#22242f;letter-spacing:0.33px;margin-right:-0.33px;right:662.60px;transform:translateY(0.50px) rotate(0.03deg) scaleX(1.1200);transform-origin:100% 0;">8 989,50$</span>
<span class="t" style="top:570px;font-size:13.40px;color:#22242f;letter-spacing:0.33px;margin-right:-0.33px;right:556.60px;transform:translateY(0.50px) rotate(0.03deg) scaleX(1.1200);transform-origin:100% 0;">1,28%</span>
<span class="t" style="top:570px;font-size:13.40px;color:#22242f;right:472.00px;transform:translateY(0.50px) rotate(0.03deg) scaleX(1.1200);transform-origin:100% 0;">9 011,00</span>
<span class="t" style="top:570px;font-size:13.40px;color:#22242f;right:391.60px;transform:translateY(0.50px) rotate(0.03deg) scaleX(1.1200);transform-origin:100% 0;">9 011,00</span>
<span class="t" style="top:570px;font-size:13.40px;color:#22242f;right:311.00px;transform:translateY(0.50px) rotate(0.03deg) scaleX(1.1200);transform-origin:100% 0;">8 989,00</span>
<span class="t" style="top:570px;font-size:13.40px;color:#22242f;right:228.60px;transform:translateY(0.50px) rotate(0.03deg) scaleX(1.1200);transform-origin:100% 0;">8 875,52</span>
<span class="t" style="top:570px;font-size:13.40px;color:#22242f;right:134.80px;transform:translateY(0.50px) rotate(0.03deg) scaleX(1.1200);transform-origin:100% 0;">354</span>
<span class="t" style="top:570px;font-size:13.40px;color:#22242f;right:21.20px;transform:translateY(0.50px) rotate(0.03deg) scaleX(1.0796);transform-origin:100% 0;">09.09, 15:20</span>
<div class="r" style="left:279.00px;top:623.00px;width:960.00px;height:1.00px;background:#dfdfdf;"></div>
<span class="t" style="top:601px;font-size:13.40px;color:#1a5d98;left:303.80px;transform:translateY(0.50px) rotate(0.03deg) scaleX(1.0760);transform-origin:0 0;">Пшеница (ZW)</span>
<span class="t" style="top:601px;font-size:13.40px;color:#22242f;letter-spacing:0.33px;margin-right:-0.33px;right:662.60px;transform:translateY(0.50px) rotate(0.03deg) scaleX(1.1200);transform-origin:100% 0;">565,5USX</span>
<span class="t" style="top:601px;font-size:13.40px;color:#22242f;letter-spacing:0.33px;margin-right:-0.33px;right:556.60px;transform:translateY(0.50px) rotate(0.03deg) scaleX(1.1200);transform-origin:100% 0;">0,31%</span>
<span class="t" style="top:601px;font-size:13.40px;color:#22242f;right:472.00px;transform:translateY(0.50px) rotate(0.03deg) scaleX(1.1200);transform-origin:100% 0;">565,5</span>
<span class="t" style="top:601px;font-size:13.40px;color:#22242f;right:391.60px;transform:translateY(0.50px) rotate(0.03deg) scaleX(1.1200);transform-origin:100% 0;">567,25</span>
<span class="t" style="top:601px;font-size:13.40px;color:#22242f;right:311.00px;transform:translateY(0.50px) rotate(0.03deg) scaleX(1.1200);transform-origin:100% 0;">562,0</span>
<span class="t" style="top:601px;font-size:13.40px;color:#22242f;right:228.60px;transform:translateY(0.50px) rotate(0.03deg) scaleX(1.1200);transform-origin:100% 0;">567,0</span>
<span class="t" style="top:601px;font-size:13.40px;color:#22242f;right:21.20px;transform:translateY(0.50px) rotate(0.03deg) scaleX(1.0796);transform-origin:100% 0;">09.09, 15:20</span>
<div class="r" style="left:279.00px;top:624.00px;width:960.00px;height:30.00px;background:#f8f8f8;"></div>
<div class="r" style="left:279.00px;top:654.00px;width:960.00px;height:1.00px;background:#dfdfdf;"></div>
<span class="t" style="top:632px;font-size:13.40px;color:#1a5d98;left:303.80px;transform:translateY(0.50px) rotate(0.03deg) scaleX(1.0558);transform-origin:0 0;">Палладий (PA)</span>
<span class="t" style="top:632px;font-size:13.40px;color:#22242f;letter-spacing:0.33px;margin-right:-0.33px;right:662.60px;transform:translateY(0.50px) rotate(0.03deg) scaleX(1.1200);transform-origin:100% 0;">918,50$</span>
<span class="t" style="top:632px;font-size:13.40px;color:#22242f;letter-spacing:0.33px;margin-right:-0.33px;right:556.60px;transform:translateY(0.50px) rotate(0.03deg) scaleX(1.1200);transform-origin:100% 0;">1,16%</span>
<span class="t" style="top:632px;font-size:13.40px;color:#22242f;right:472.00px;transform:translateY(0.50px) rotate(0.03deg) scaleX(1.1200);transform-origin:100% 0;">900,50</span>
<span class="t" style="top:632px;font-size:13.40px;color:#22242f;right:391.60px;transform:translateY(0.50px) rotate(0.03deg) scaleX(1.1200);transform-origin:100% 0;">920,00</span>
<span class="t" style="top:632px;font-size:13.40px;color:#22242f;right:311.00px;transform:translateY(0.50px) rotate(0.03deg) scaleX(1.1200);transform-origin:100% 0;">900,50</span>
<span class="t" style="top:632px;font-size:13.40px;color:#22242f;right:228.60px;transform:translateY(0.50px) rotate(0.03deg) scaleX(1.1200);transform-origin:100% 0;">898,50</span>
<span class="t" style="top:632px;font-size:13.40px;color:#22242f;right:21.20px;transform:translateY(0.50px) rotate(0.03deg) scaleX(1.0796);transform-origin:100% 0;">09.09, 15:20</span>
<div class="r" style="left:279.00px;top:685.00px;width:960.00px;height:1.00px;background:#dfdfdf;"></div>
<span class="t" style="top:663px;font-size:13.40px;color:#1a5d98;left:303.80px;transform:translateY(0.50px) rotate(0.03deg) scaleX(1.0459);transform-origin:0 0;">Gasoline (XBR)</span>
<span class="t" style="top:663px;font-size:13.40px;color:#22242f;letter-spacing:0.33px;margin-right:-0.33px;right:662.60px;transform:translateY(0.50px) rotate(0.03deg) scaleX(1.1200);transform-origin:100% 0;">1,9295$</span>
<span class="t" style="top:663px;font-size:13.40px;color:#22242f;letter-spacing:0.33px;margin-right:-0.33px;right:556.60px;transform:translateY(0.50px) rotate(0.03deg) scaleX(1.1200);transform-origin:100% 0;">-0,56%</span>
<span class="t" style="top:663px;font-size:13.40px;color:#22242f;right:472.00px;transform:translateY(0.50px) rotate(0.03deg) scaleX(1.1200);transform-origin:100% 0;">1,9034</span>
<span class="t" style="top:663px;font-size:13.40px;color:#22242f;right:391.60px;transform:translateY(0.50px) rotate(0.03deg) scaleX(1.1200);transform-origin:100% 0;">1,9504</span>
<span class="t" style="top:663px;font-size:13.40px;color:#22242f;right:311.00px;transform:translateY(0.50px) rotate(0.03deg) scaleX(1.1200);transform-origin:100% 0;">1,8995</span>
<span class="t" style="top:663px;font-size:13.40px;color:#22242f;right:228.60px;transform:translateY(0.50px) rotate(0.03deg) scaleX(1.1200);transform-origin:100% 0;">1,8960</span>
<span class="t" style="top:663px;font-size:13.40px;color:#22242f;right:21.20px;transform:translateY(0.50px) rotate(0.03deg) scaleX(1.0796);transform-origin:100% 0;">09.09, 15:20</span>
<div class="r" style="left:279.00px;top:686.00px;width:960.00px;height:30.00px;background:#f8f8f8;"></div>
<div class="r" style="left:279.00px;top:716.00px;width:960.00px;height:1.00px;background:#dfdfdf;"></div>
<span class="t" style="top:694px;font-size:13.40px;color:#1a5d98;left:303.80px;transform:translateY(0.50px) rotate(0.03deg) scaleX(1.0731);transform-origin:0 0;">Heating Oil (HO)</span>
<span class="t" style="top:694px;font-size:13.40px;color:#22242f;letter-spacing:0.33px;margin-right:-0.33px;right:662.60px;transform:translateY(0.50px) rotate(0.03deg) scaleX(1.1200);transform-origin:100% 0;">2,1384$</span>
<span class="t" style="top:694px;font-size:13.40px;color:#22242f;letter-spacing:0.33px;margin-right:-0.33px;right:556.60px;transform:translateY(0.50px) rotate(0.03deg) scaleX(1.1200);transform-origin:100% 0;">-0,79%</span>
<span class="t" style="top:694px;font-size:13.40px;color:#22242f;right:472.00px;transform:translateY(0.50px) rotate(0.03deg) scaleX(1.1200);transform-origin:100% 0;">2,1286</span>
<span class="t" style="top:694px;font-size:13.40px;color:#22242f;right:391.60px;transform:translateY(0.50px) rotate(0.03deg) scaleX(1.1200);transform-origin:100% 0;">2,1631</span>
<span class="t" style="top:694px;font-size:13.40px;color:#22242f;right:311.00px;transform:translateY(0.50px) rotate(0.03deg) scaleX(1.1200);transform-origin:100% 0;">2,1282</span>
<span class="t" style="top:694px;font-size:13.40px;color:#22242f;right:228.60px;transform:translateY(0.50px) rotate(0.03deg) scaleX(1.1200);transform-origin:100% 0;">2,1150</span>
<span class="t" style="top:694px;font-size:13.40px;color:#22242f;right:21.20px;transform:translateY(0.50px) rotate(0.03deg) scaleX(1.0796);transform-origin:100% 0;">09.09, 14:42</span>
<svg style="left:279.00px;top:167.00px" width="971" height="585" viewBox="279 167 971 585"><path transform="translate(292.400 328.50)" d="M0 -5.700 L1.700 -1.950 L5.800 -1.500 L2.700 1.250 L3.600 5.300 L0 3.200 L-3.600 5.300 L-2.700 1.250 L-5.800 -1.500 L-1.700 -1.950 Z" fill="none" stroke="#454b5a" stroke-width="0.950" stroke-linejoin="round"/><path transform="translate(292.400 359.50)" d="M0 -5.700 L1.700 -1.950 L5.800 -1.500 L2.700 1.250 L3.600 5.300 L0 3.200 L-3.600 5.300 L-2.700 1.250 L-5.800 -1.500 L-1.700 -1.950 Z" fill="none" stroke="#454b5a" stroke-width="0.950" stroke-linejoin="round"/><path transform="translate(292.400 390.50)" d="M0 -5.700 L1.700 -1.950 L5.800 -1.500 L2.700 1.250 L3.600 5.300 L0 3.200 L-3.600 5.300 L-2.700 1.250 L-5.800 -1.500 L-1.700 -1.950 Z" fill="none" stroke="#454b5a" stroke-width="0.950" stroke-linejoin="round"/><path transform="translate(292.400 421.50)" d="M0 -5.700 L1.700 -1.950 L5.800 -1.500 L2.700 1.250 L3.600 5.300 L0 3.200 L-3.600 5.300 L-2.700 1.250 L-5.800 -1.500 L-1.700 -1.950 Z" fill="none" stroke="#454b5a" stroke-width="0.950" stroke-linejoin="round"/><path transform="translate(292.400 452.50)" d="M0 -5.700 L1.700 -1.950 L5.800 -1.500 L2.700 1.250 L3.600 5.300 L0 3.200 L-3.600 5.300 L-2.700 1.250 L-5.800 -1.500 L-1.700 -1.950 Z" fill="none" stroke="#454b5a" stroke-width="0.950" stroke-linejoin="round"/><path transform="translate(292.400 483.50)" d="M0 -5.700 L1.700 -1.950 L5.800 -1.500 L2.700 1.250 L3.600 5.300 L0 3.200 L-3.600 5.300 L-2.700 1.250 L-5.800 -1.500 L-1.700 -1.950 Z" fill="none" stroke="#454b5a" stroke-width="0.950" stroke-linejoin="round"/><path transform="translate(292.400 514.50)" d="M0 -5.700 L1.700 -1.950 L5.800 -1.500 L2.700 1.250 L3.600 5.300 L0 3.200 L-3.600 5.300 L-2.700 1.250 L-5.800 -1.500 L-1.700 -1.950 Z" fill="none" stroke="#454b5a" stroke-width="0.950" stroke-linejoin="round"/><path transform="translate(292.400 545.50)" d="M0 -5.700 L1.700 -1.950 L5.800 -1.500 L2.700 1.250 L3.600 5.300 L0 3.200 L-3.600 5.300 L-2.700 1.250 L-5.800 -1.500 L-1.700 -1.950 Z" fill="none" stroke="#454b5a" stroke-width="0.950" stroke-linejoin="round"/><path transform="translate(292.400 576.50)" d="M0 -5.700 L1.700 -1.950 L5.800 -1.500 L2.700 1.250 L3.600 5.300 L0 3.200 L-3.600 5.300 L-2.700 1.250 L-5.800 -1.500 L-1.700 -1.950 Z" fill="none" stroke="#454b5a" stroke-width="0.950" stroke-linejoin="round"/><path transform="translate(292.400 607.50)" d="M0 -5.700 L1.700 -1.950 L5.800 -1.500 L2.700 1.250 L3.600 5.300 L0 3.200 L-3.600 5.300 L-2.700 1.250 L-5.800 -1.500 L-1.700 -1.950 Z" fill="none" stroke="#454b5a" stroke-width="0.950" stroke-linejoin="round"/><path transform="translate(292.400 638.50)" d="M0 -5.700 L1.700 -1.950 L5.800 -1.500 L2.700 1.250 L3.600 5.300 L0 3.200 L-3.600 5.300 L-2.700 1.250 L-5.800 -1.500 L-1.700 -1.950 Z" fill="none" stroke="#454b5a" stroke-width="0.950" stroke-linejoin="round"/><path transform="translate(292.400 669.50)" d="M0 -5.700 L1.700 -1.950 L5.800 -1.500 L2.700 1.250 L3.600 5.300 L0 3.200 L-3.600 5.300 L-2.700 1.250 L-5.800 -1.500 L-1.700 -1.950 Z" fill="none" stroke="#454b5a" stroke-width="0.950" stroke-linejoin="round"/><path transform="translate(292.400 700.50)" d="M0 -5.700 L1.700 -1.950 L5.800 -1.500 L2.700 1.250 L3.600 5.300 L0 3.200 L-3.600 5.300 L-2.700 1.250 L-5.800 -1.500 L-1.700 -1.950 Z" fill="none" stroke="#454b5a" stroke-width="0.950" stroke-linejoin="round"/><rect x="1064.800" y="225.800" width="16.600" height="9.800" rx="4.900" fill="none" stroke="#858a95" stroke-width="1.100"/><circle cx="1069.700" cy="230.700" r="4.900" fill="none" stroke="#858a95" stroke-width="1.100"/><circle cx="1224.300" cy="225.300" r="2.300" fill="none" stroke="#6d7280" stroke-width="1.150"/><circle cx="1217.700" cy="229.400" r="2.300" fill="none" stroke="#6d7280" stroke-width="1.150"/><circle cx="1224.300" cy="233.500" r="2.300" fill="none" stroke="#6d7280" stroke-width="1.150"/><path d="M1219.700 228.200 L1222.300 226.500 M1219.700 230.600 L1222.300 232.300" stroke="#6d7280" stroke-width="1.150"/><polyline points="393,224 396.400,227.500 393,231" fill="none" stroke="#a9a9b0" stroke-width="1.100" stroke-linecap="round" stroke-linejoin="round"/></svg>
<span class="t" style="top:731px;font-size:15.35px;color:#22242f;left:293.40px;transform:scaleX(1.0531);transform-origin:0 0;">Если нужного инструмента нет в списке, воспользуйтесь</span>
<span class="t" style="top:731px;font-size:15.35px;color:#1a5d98;left:723.10px;transform:scaleX(1.0531);transform-origin:0 0;">поиском</span>
</body></html>
